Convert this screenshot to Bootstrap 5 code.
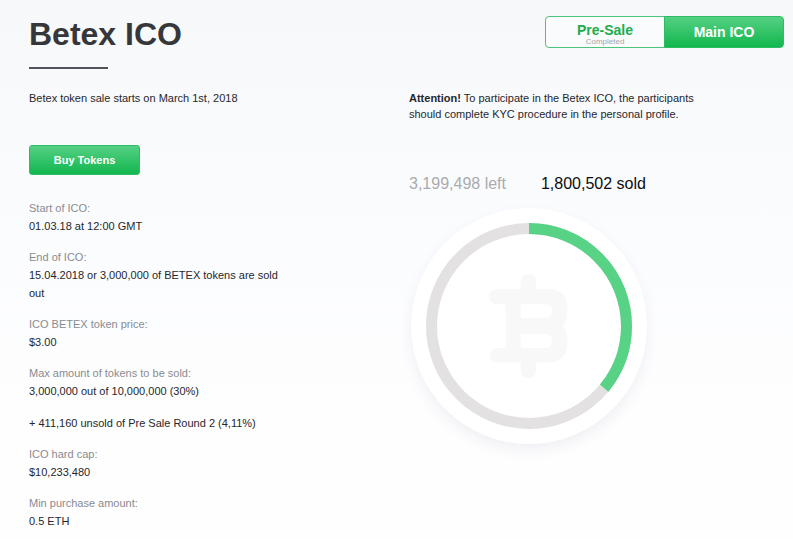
<!DOCTYPE html>
<html lang="en">
<head>
<meta charset="utf-8">
<meta name="viewport" content="width=device-width, initial-scale=1">
<title>Betex ICO</title>
<link href="https://cdn.jsdelivr.net/npm/bootstrap@5.3.0/dist/css/bootstrap.min.css" rel="stylesheet">
<style>
  body {
    font-family: "Liberation Sans", Arial, sans-serif;
    font-size: 11px;
    line-height: 16px;
    color: #25272c;
    background: linear-gradient(#f7f8fa, #fbfcfe 45%, #fefefe 80%) no-repeat #fefefe;
    min-height: 100vh;
  }
  .page { padding: 16px 4px 8px 29px; }
  .page-head { padding-right: 5px; }
  .page-title { font-size: 32px; line-height: 36px; color: #35373a; }
  .title-rule { width: 79px; height: 2px; margin-top: 15px; background: #505359; }
  .intro { margin-top: 21px; }
  .btn-green {
    --bs-btn-color: #fff;
    --bs-btn-hover-color: #fff;
    --bs-btn-active-color: #fff;
    --bs-btn-border-color: #2cbd63;
    --bs-btn-hover-border-color: #16b550;
    background-image: linear-gradient(#55d083, #12b74f);
  }
  .btn-buy { width: 111px; height: 30px; margin: 39px 0 25px; padding: 0; font-size: 11px; border-radius: 3px; }
  .stage-toggle { width: 239px; }
  .stage-toggle .btn { flex: 1 1 0; height: 32px; padding: 0; font-size: 14px; line-height: 16px; border-radius: 4px; }
  .stage-toggle .btn-stage {
    --bs-btn-color: #20ac4b;
    --bs-btn-border-color: #4fc27c;
    --bs-btn-bg: #fafbfc;
    --bs-btn-hover-color: #168f3b;
    --bs-btn-hover-border-color: #20ac4b;
    padding-bottom: 1px;
  }
  .stage-note { font-size: 8px; line-height: 8px; color: #a5a7a9; }
  .facts { max-width: 250px; }
  .facts dt { font-weight: 400; line-height: 17px; color: #898b91; }
  .facts dd { margin-bottom: 14px; line-height: 18px; }
  .notice { max-width: 290px; }
  .totals { gap: 35px; margin-top: 52px; font-size: 16px; line-height: 20px; }
  .left-total { color: #a9abad; }
  .sold-total { color: #0c0d10; }
  .dial { width: 236px; height: 236px; margin-top: 14px; margin-left: 2px; background: #fff; box-shadow: 0 6px 14px rgba(40, 50, 110, .07); }
</style>
<script src="https://cdn.jsdelivr.net/npm/bootstrap@5.3.0/dist/js/bootstrap.bundle.min.js"></script>
</head>
<body>
<main class="page">
  <header class="page-head d-flex justify-content-between align-items-start">
    <h1 class="page-title fw-bold mb-0">Betex ICO</h1>
    <div class="btn-group stage-toggle" role="group" aria-label="Sale stage">
      <button type="button" class="btn btn-stage d-flex flex-column align-items-center justify-content-end"><span class="fw-bold">Pre-Sale</span><span class="stage-note">Completed</span></button>
      <button type="button" class="btn btn-green fw-bold">Main ICO</button>
    </div>
  </header>
  <div class="title-rule"></div>
  <div class="row g-0 intro">
    <section class="col-6">
      <p class="mb-0">Betex token sale starts on March 1st, 2018</p>
      <button type="button" class="btn btn-green btn-buy fw-bold d-block">Buy Tokens</button>
      <dl class="facts mb-0">
        <dt>Start of ICO:</dt>
        <dd>01.03.18 at 12:00 GMT</dd>
        <dt>End of ICO:</dt>
        <dd>15.04.2018 or 3,000,000 of BETEX tokens are sold out</dd>
        <dt>ICO BETEX token price:</dt>
        <dd>$3.00</dd>
        <dt>Max amount of tokens to be sold:</dt>
        <dd>3,000,000 out of 10,000,000 (30%)</dd>
        <dd>+ 411,160 unsold of Pre Sale Round 2 (4,11%)</dd>
        <dt>ICO hard cap:</dt>
        <dd>$10,233,480</dd>
        <dt>Min purchase amount:</dt>
        <dd class="mb-0">0.5 ETH</dd>
      </dl>
    </section>
    <section class="col-6">
      <p class="notice mb-0"><strong>Attention!</strong> To participate in the Betex ICO, the participants should complete KYC procedure in the personal profile.</p>
      <div class="totals d-flex">
        <span class="left-total">3,199,498 left</span>
        <span class="sold-total">1,800,502 sold</span>
      </div>
      <div class="dial rounded-circle">
        <svg class="d-block w-100 h-100" viewBox="-118 -118 236 236" role="img" aria-label="36% of tokens sold">
          <circle r="97.5" fill="none" stroke="#e3e1e2" stroke-width="11"/>
          <circle r="97.5" fill="none" stroke="#58d386" stroke-width="11" pathLength="100" stroke-dasharray="36 64" transform="rotate(-90)"/>
          <g transform="translate(-49 -60.7) scale(.3333)">
            <path fill="#f8f8f8" fill-rule="evenodd" d="M122 72V48Q122 27 145 27T168 48V72H212Q262 76 262 122V146Q262 168 246 182Q262 194 262 216V238Q258 286 212 292H168V318Q168 338 145 338T122 318V292H50Q30 290 30 271T50 248H77V117H50Q27 115 27 94T50 72ZM122 117V158H202Q216 154 216 138T202 117ZM122 205V248H202Q216 243 216 227T202 205Z"/>
          </g>
        </svg>
      </div>
    </section>
  </div>
</main>
</body>
</html>
